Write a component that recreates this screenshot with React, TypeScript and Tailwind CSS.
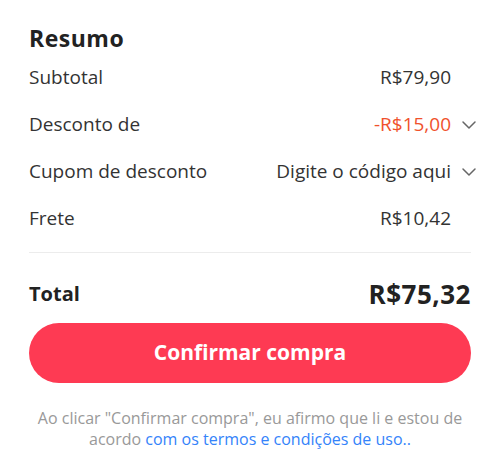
import React from "react";
import { ChevronDown } from "lucide-react";

function Row({ label, value, valueClass, chevron }: { label: string; value: string; valueClass?: string; chevron?: boolean }) {
  return (
    <div className="flex h-[47px] items-center justify-between">
      <span className="text-[19px] text-[#333]">{label}</span>
      <div className="flex items-center -mr-[10px]">
        <span className={"text-[19px] " + (valueClass ?? "text-[#333]")}>{value}</span>
        <div className="ml-[6px] flex h-[24px] w-[24px] items-center justify-center">
          {chevron ? <ChevronDown size={24} strokeWidth={1.5} className="text-[#666]" /> : null}
        </div>
      </div>
    </div>
  );
}

export default function App() {
  return (
    <div className="w-[500px] h-[459px] bg-white px-[29px] pt-[23px]" style={{ fontFamily: '"Open Sans", sans-serif' }}>
      <div className="h-[31px] flex items-center text-[23px] tracking-[0.5px] font-bold text-[#222]">Resumo</div>
      <Row label="Subtotal" value="R$79,90" />
      <Row label="Desconto de" value="-R$15,00" valueClass="text-[#f0512c]" chevron />
      <Row label="Cupom de desconto" value="Digite o código aqui" chevron />
      <Row label="Frete" value="R$10,42" />
      <div className="mt-[10px] h-px bg-[#ececec]" />
      <div className="mt-[21px] flex h-[40px] items-center justify-between">
        <span className="text-[20px] font-bold text-[#222]">Total</span>
        <span className="text-[26px] tracking-[0.5px] font-bold text-[#222]">R$75,32</span>
      </div>
      <button className="mt-[9px] flex h-[60px] w-full items-center justify-center rounded-full bg-[#fe3a53] text-[21px] font-bold text-white">
        Confirmar compra
      </button>
      <div className="mt-[25px] text-center text-[16px] leading-[21px] text-[#999]">
        <div>Ao clicar "Confirmar compra", eu afirmo que li e estou de</div>
        <div>
          acordo <span className="text-[#3483fa]">com os termos e condições de uso..</span>
        </div>
      </div>
    </div>
  );
}
